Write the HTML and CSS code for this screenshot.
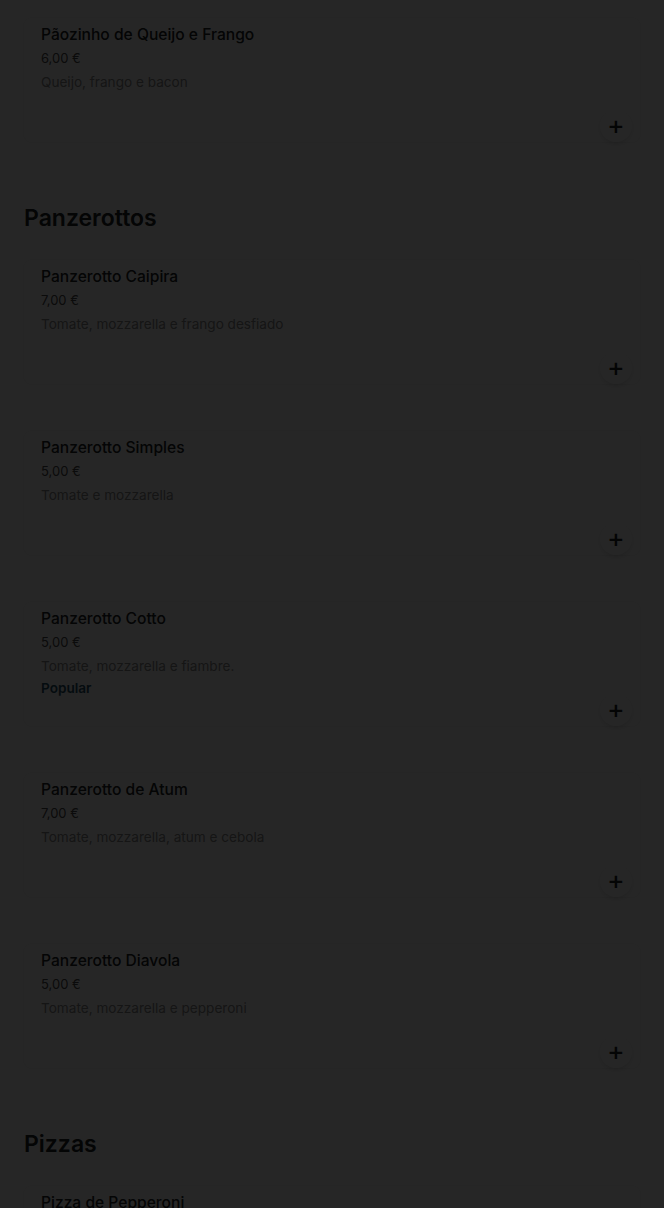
FILE: index.html
```html
<!DOCTYPE html>
<html lang="pt-PT">
<head>
    <meta charset="UTF-8">
    <meta name="viewport" content="width=device-width, initial-scale=1.0">
    <title>Menu</title>
    <link rel="stylesheet" href="styles.css">
</head>
<body>

    <div class="menu">
        <section class="categoria">
            <div class="item">
                <h3 class="item-nome">Pãozinho de Queijo e Frango</h3>
                <div class="item-preco">6,00 €</div>
                <p class="item-desc">Queijo, frango e bacon</p>
                <button class="add-btn" aria-label="Adicionar">+</button>
            </div>
        </section>

        <section class="categoria">
            <h2>Panzerottos</h2>
            <div class="item">
                <h3 class="item-nome">Panzerotto Caipira</h3>
                <div class="item-preco">7,00 €</div>
                <p class="item-desc">Tomate, mozzarella e frango desfiado</p>
                <button class="add-btn" aria-label="Adicionar">+</button>
            </div>
            <div class="item">
                <h3 class="item-nome">Panzerotto Simples</h3>
                <div class="item-preco">5,00 €</div>
                <p class="item-desc">Tomate e mozzarella</p>
                <button class="add-btn" aria-label="Adicionar">+</button>
            </div>
            <div class="item">
                <h3 class="item-nome">Panzerotto Cotto</h3>
                <div class="item-preco">5,00 €</div>
                <p class="item-desc">Tomate, mozzarella e fiambre.</p>
                <span class="tag">Popular</span>
                <button class="add-btn" aria-label="Adicionar">+</button>
            </div>
            <div class="item">
                <h3 class="item-nome">Panzerotto de Atum</h3>
                <div class="item-preco">7,00 €</div>
                <p class="item-desc">Tomate, mozzarella, atum e cebola</p>
                <button class="add-btn" aria-label="Adicionar">+</button>
            </div>
            <div class="item">
                <h3 class="item-nome">Panzerotto Diavola</h3>
                <div class="item-preco">5,00 €</div>
                <p class="item-desc">Tomate, mozzarella e pepperoni</p>
                <button class="add-btn" aria-label="Adicionar">+</button>
            </div>
        </section>

        <section class="categoria">
            <h2>Pizzas</h2>
            <div class="item">
                <h3 class="item-nome">Pizza de Pepperoni</h3>
                <div class="item-preco">9,00 €</div>
                <p class="item-desc">Tomate, mozzarella e pepperoni</p>
                <button class="add-btn" aria-label="Adicionar">+</button>
            </div>
        </section>
    </div>

    <!-- fundo escuro do modal -->
    <div class="overlay"></div>

</body>
</html>
```

FILE: styles.css
```css
body {
    font-family: Inter, "Noto Sans", Arial, sans-serif;
    margin: 0;
    background-color: #fff;
    color: #202125;
}
.menu {
    padding: 18px 24px 40px;
}
.categoria h2 {
    font-size: 23px;
    font-weight: 600;
    line-height: 30px;
    margin: 61px 0 27px;
}
.item {
    position: relative;
    height: 124px;
    box-sizing: border-box;
    padding: 7px 17px 0;
    margin-bottom: 47px;
    border-radius: 8px;
    box-shadow: 0 0 0 1px rgba(0, 0, 0, 0.03), 0 1px 4px rgba(0, 0, 0, 0.03);
}
.item:last-child {
    margin-bottom: 0;
}
.item-nome {
    margin: 0;
    font-size: 15.6px;
    font-weight: 500;
    line-height: 19px;
}
.item-preco {
    margin-top: 4px;
    font-size: 13px;
    line-height: 20px;
    color: #4a4a4a;
}
.item-desc {
    margin: 4px 0 0;
    font-size: 13.6px;
    line-height: 20px;
    color: #8c8c8c;
}
.tag {
    display: block;
    margin-top: 2px;
    font-size: 13.6px;
    font-weight: 600;
    line-height: 20px;
    color: #1f4f66;
}
.add-btn {
    position: absolute;
    right: 8px;
    bottom: 0;
    width: 32px;
    height: 32px;
    border: none;
    border-radius: 50%;
    background-color: #fff;
    box-shadow: 0 2px 5px rgba(0, 0, 0, 0.12);
    font-family: "DejaVu Sans", sans-serif;
    font-size: 20px;
    font-weight: bold;
    line-height: 32px;
    padding: 0;
    color: #202125;
    cursor: pointer;
}
.overlay {
    position: fixed;
    inset: 0;
    background-color: rgba(0, 0, 0, 0.85);
}
```
